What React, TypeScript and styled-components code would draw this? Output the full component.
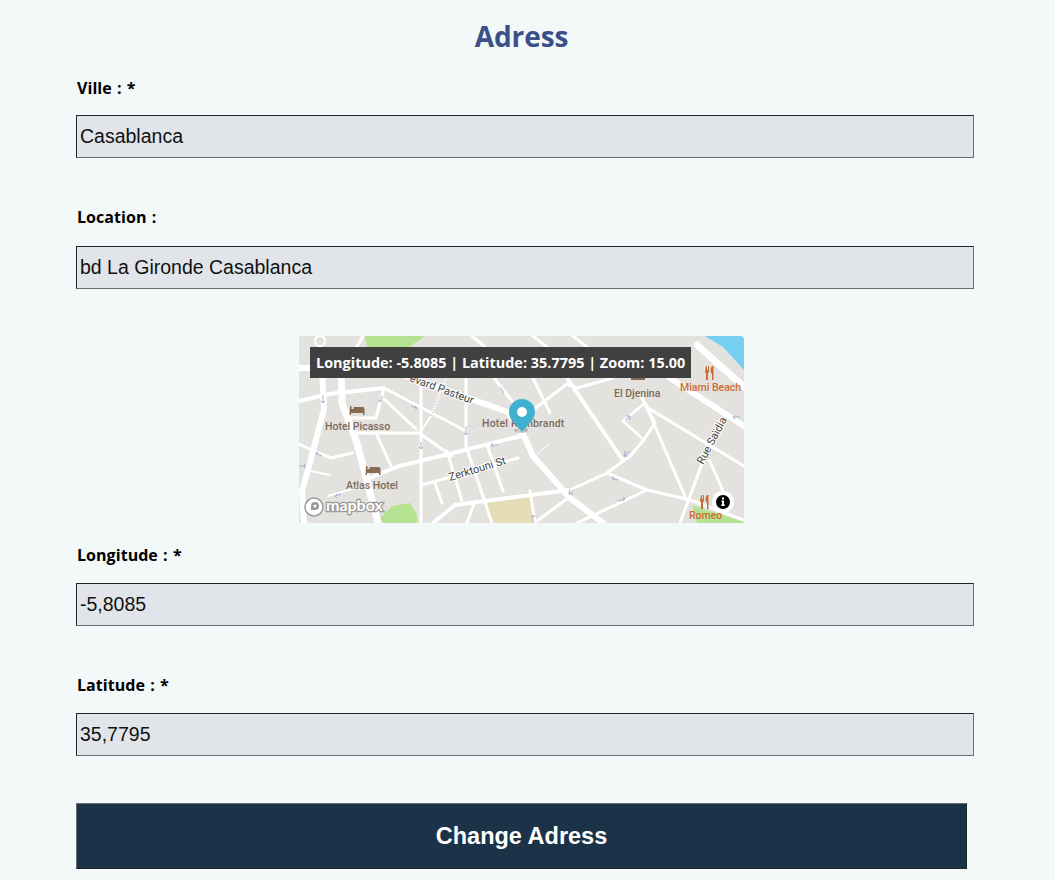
import React from "react";
import styled, { createGlobalStyle } from "styled-components";

const Global = createGlobalStyle`
  html, body { margin: 0; padding: 0; background: #f3f8f9; }
`;

const Page = styled.main`
  box-sizing: border-box;
  width: 1055px;
  height: 880px;
  overflow: hidden;
  padding: 0 81px 0 76px;
  background: #f3f8f9;
  font-family: "Open Sans", sans-serif;
`;

const Title = styled.h1`
  margin: 0;
  padding: 19px 7px 0 0;
  height: 76px;
  box-sizing: border-box;
  text-align: center;
  font-size: 28px;
  line-height: 34px;
  font-weight: 700;
  color: #3b5086;
  font-family: "Open Sans", sans-serif;
  letter-spacing: -0.1px;
`;

const Field = styled.div<{ $height: number }>`
  height: ${(p) => p.$height}px;
`;

const Label = styled.label<{ $gap: number }>`
  display: block;
  height: 30px;
  padding-top: 1px;
  margin-left: 1px;
  margin-bottom: ${(p) => p.$gap - 31}px;
  font-size: 16px;
  line-height: 22px;
  font-weight: 700;
  color: #000;
  word-spacing: 1px;
  letter-spacing: 0.05px;
`;

const TextInput = styled.input`
  display: block;
  box-sizing: border-box;
  width: 898px;
  height: 43px;
  padding: 0 3px;
  margin: 0;
  border: 1px solid;
  border-color: #212529 #6b6f73 #6b6f73 #212529;
  border-radius: 0;
  background: #e1e5e9;
  color: #111;
  font-family: "Liberation Sans", Arial, sans-serif;
  font-size: 19.5px;
  outline: none;
`;

const MapWrap = styled.div`
  position: relative;
  width: 445px;
  height: 187px;
  margin: 0 0 0 223px;
  overflow: hidden;
  border-top-right-radius: 4px;
  background: #e4e2de;
`;

const MapSvg = styled.svg`
  display: block;
  width: 445px;
  height: 187px;
`;

const Coordinates = styled.div`
  position: absolute;
  top: 11px;
  left: 11px;
  box-sizing: border-box;
  height: 31px;
  width: 381px;
  padding: 1px 0 0 6px;
  background: #404040;
  color: #fff;
  font-size: 14.45px;
  line-height: 30px;
  font-weight: 700;
  white-space: nowrap;
`;

const Submit = styled.button`
  display: block;
  box-sizing: border-box;
  width: 891px;
  height: 66px;
  margin: 0;
  padding: 0;
  border: 1px solid;
  border-color: #6b6f73 #212529 #212529 #6b6f73;
  background: #1c3249;
  color: #fff;
  font-family: "Liberation Sans", Arial, sans-serif;
  font-size: 23.5px;
  font-weight: 700;
`;

const roads: [string, number][] = [
  ["M299 368 H345", 6],
  ["M400 374 L508 412 L525 438 L533 456 L570 498 L603 523", 6],
  ["M322 370 L324 409 L309 466 L302 491 L304 523", 6],
  ["M341 370 L342 403 L357 443 L378 523", 7],
  ["M697 345 L744 387", 7],
  ["M670 378 L744 426", 6],
  ["M299 401 L329 394 L384 388", 4],
  ["M384 388 L466 431", 3],
  ["M384 388 L376 418 H349", 3],
  ["M384 399 L416 429", 3],
  ["M352 433 H421", 3],
  ["M376 433 L391 466", 3],
  ["M421 378 V523", 3],
  ["M421 431 L431 416 L446 378", 2],
  ["M419 433 L452 456", 3],
  ["M466 378 V446 L492 523", 3],
  ["M494 378 L512 401", 3],
  ["M363 336 L355 350", 3],
  ["M472 336 L485 347", 3],
  ["M533 336 L547 347", 3],
  ["M573 336 L587 347", 3],
  ["M533 378 L550 413", 3],
  ["M533 410 L567 384 L577 388 L613 378", 3],
  ["M567 378 L622 459", 4],
  ["M645 403 L623 421 L643 439", 2.5],
  ["M640 394 L655 423 L643 441 L630 456 L607 473 L570 490", 3],
  ["M645 403 L687 501", 3],
  ["M648 408 L744 466", 3],
  ["M299 444 L319 453 L331 458 L352 453", 3],
  ["M310 471 L330 475", 2],
  ["M365 480 L399 466 L449 454 L525 435", 4],
  ["M328 496 L362 486", 2],
  ["M447 451 L462 501", 3],
  ["M487 445 L503 491", 3],
  ["M422 485 L518 458", 3],
  ["M435 483 L442 503", 3],
  ["M433 523 L455 505 L570 490", 4],
  ["M475 501 L467 523", 3],
  ["M607 473 L647 490 L690 500 L744 520", 3],
  ["M647 490 L577 523", 3],
  ["M568 498 L537 521", 3],
  ["M530 491 L535 523", 3],
  ["M703 461 L680 523", 3],
  ["M710 461 L723 491", 3],
  ["M537 454 L549 444", 1],
];

function App() {
  return (
    <>
      <Global />
      <Page>
        <Title>Adress</Title>
        <Field $height={129}>
          <Label $gap={39}>Ville : *</Label>
          <TextInput defaultValue="Casablanca" />
        </Field>
        <Field $height={131}>
          <Label $gap={41}>Location :</Label>
          <TextInput defaultValue="bd La Gironde Casablanca" />
        </Field>
        <Field $height={207}>
          <MapWrap>
            <MapSvg viewBox="299 336 445 187" aria-label="Map">
              <rect x="299" y="336" width="445" height="187" fill="#e4e2de" />
              <path d="M365 336 H425 L405 350 L395 372 H372 Z" fill="#b5e392" />
              <path d="M705 336 H744 V370 L723 347 Z" fill="#75cff0" />
              <path d="M483 503 L532 491 L535 523 H492 Z" fill="#e4dcb4" />
              <path d="M380 518 L392 506 L410 503 L417 515 V523 H383 Z" fill="#b5e392" />
              <path d="M692 505 L744 522 V523 H697 Z" fill="#b5e392" />
              <path d="M450 523 Q456 518 463 523 Z" fill="#f3d5d8" />
              <g fill="none" stroke="#fff" strokeLinejoin="round" strokeLinecap="round">
                {roads.map(([d, w]) => (
                  <path key={d} d={d} strokeWidth={w} />
                ))}
                <circle cx="320" cy="341" r="5" strokeWidth="2" />
              </g>
              <g fill="none" stroke="#a6afd0" strokeWidth="1">
                <path d="M323 395 v8 M321 401 l2 2 2 -2" />
                <path d="M382 396 l-2 6 M378 400 l2 2 2 -2" />
                <path d="M421 442 v7 M419 447 l2 2 2 -2" />
                <path d="M466 427 v8 M464 433 l2 2 2 -2" />
                <path d="M322 456 l-6 -3 M318 452 l-2 1 1 2" />
                <path d="M299 466 h7 M304 464 l2 2 -2 2" />
                <path d="M335 496 l6 -2 M337 494 l-2 2 2 2" />
                <path d="M491 445 h7 M493 443 l-2 2 2 2" />
                <path d="M630 451 l-6 5 M625 451 l-1 5 4 0" />
                <path d="M574 490 l-5 4 M570 489 l-1 5 4 0" />
                <path d="M612 478 l6 2 M614 476 l-2 2 2 2" />
                <path d="M618 501 l7 -2 M623 497 l2 2 -2 2" />
                <path d="M533 523 v-8 M531 517 l2 -2 2 2" />
                <path d="M411 406 l6 2 M415 406 l2 2 -2 2" />
                <path d="M500 387 l4 6" />
                <path d="M625 420 l5 -4 M626 416 h4 v4" />
                <path d="M733 417 h7 M735 415 l-2 2 2 2" />
                <path d="M467 427 Q485 425 500 418" strokeDasharray="1 2" />
                <path d="M431 416 L446 378" strokeDasharray="1 2" />
              </g>
              <g fontFamily="Roboto, sans-serif" fontSize="10.500" fontWeight="500" fill="#7c6a5c">
                <text x="325" y="430">Hotel Picasso</text>
                <text x="482" y="427" letterSpacing="0.2">Hotel Rembrandt</text>
                <text x="346" y="489">Atlas Hotel</text>
                <text x="614" y="397">El Djenina</text>
              </g>
              <g fontFamily="Roboto, sans-serif" fontSize="10.500" fontWeight="500" fill="#cc6a35">
                <text x="680" y="391">Miami Beach</text>
                <text x="689" y="519">Romeo</text>
              </g>
              <g fontFamily="Roboto, sans-serif" fontSize="11" fill="#444" stroke="#fff" strokeWidth="2" paintOrder="stroke">
                <text transform="translate(409 381) rotate(20)">evard Pasteur</text>
                <text transform="translate(450 481) rotate(-17)">Zerktouni St</text>
                <text transform="translate(703 465) rotate(-62)">Rue Saïdia</text>
              </g>
              <g fill="#866a52">
                <path d="M350 406 h1.500 v3 h2 v-2 h9 a2 2 0 0 1 2 2 v6 h-1.500 v-2 h-12 v2 h-1.500 Z" />
                <path d="M366 466 h1.500 v3 h2 v-2 h9 a2 2 0 0 1 2 2 v6 h-1.500 v-2 h-12 v2 h-1.500 Z" />
                <path d="M631 378 h14 v2 h-14 Z" />
              </g>
              <g fill="#cc6a35">
                <path d="M706 366 h1 v4 h1 v-4 h1 v6 l-1 1 v7 h-2 v-7 l-1 -1 Z" />
                <path d="M712 366 c-2 2 -2 6 0 8 v6 h1.500 v-14 Z" />
                <path d="M701 495 h1 v4 h1 v-4 h1 v6 l-1 1 v7 h-2 v-7 l-1 -1 Z" />
                <path d="M707 495 c-2 2 -2 6 0 8 v6 h1.500 v-14 Z" />
              </g>
              <circle cx="723" cy="502" r="11" fill="#fff" />
              <circle cx="723" cy="502" r="7" fill="#000" />
              <path d="M722 497.500 h2 v2 h-2 Z M721.500 500.500 h2.500 v4 h0.800 v1.500 h-3.500 v-1.500 h0.800 v-2.500 h-0.600 Z" fill="#fff" />
              <ellipse cx="521" cy="430" rx="7" ry="3" fill="#000" opacity="0.2" />
              <path d="M522 432 C516 424 509 420 509 412 A13 13 0 0 1 535 412 C535 420 528 424 522 432 Z" fill="#3fb1ce" />
              <circle cx="522" cy="412" r="5" fill="#fff" />
              <g>
                <circle cx="314" cy="507" r="9" fill="#fff" stroke="#999" strokeWidth="1.500" />
                <path d="M315 502 a4 4 0 0 1 0 8 h-4 v-4 a4 4 0 0 1 4 -4 Z" fill="#999" />
                <circle cx="315" cy="506" r="1.500" fill="#fff" />
                <text x="326" y="511" fontFamily="Lato, sans-serif" fontWeight="700" fontSize="16" fill="#fff" stroke="#999" strokeWidth="2.500" paintOrder="stroke">mapbox</text>
              </g>
            </MapSvg>
            <Coordinates>Longitude: -5.8085 | Latitude: 35.7795 | Zoom: 15.00</Coordinates>
          </MapWrap>
        </Field>
        <Field $height={130}>
          <Label $gap={40}>Longitude : *</Label>
          <TextInput defaultValue="-5,8085" />
        </Field>
        <Field $height={130}>
          <Label $gap={40}>Latitude : *</Label>
          <TextInput defaultValue="35,7795" />
        </Field>
        <Submit type="button">Change Adress</Submit>
      </Page>
    </>
  );
}

export default App;
